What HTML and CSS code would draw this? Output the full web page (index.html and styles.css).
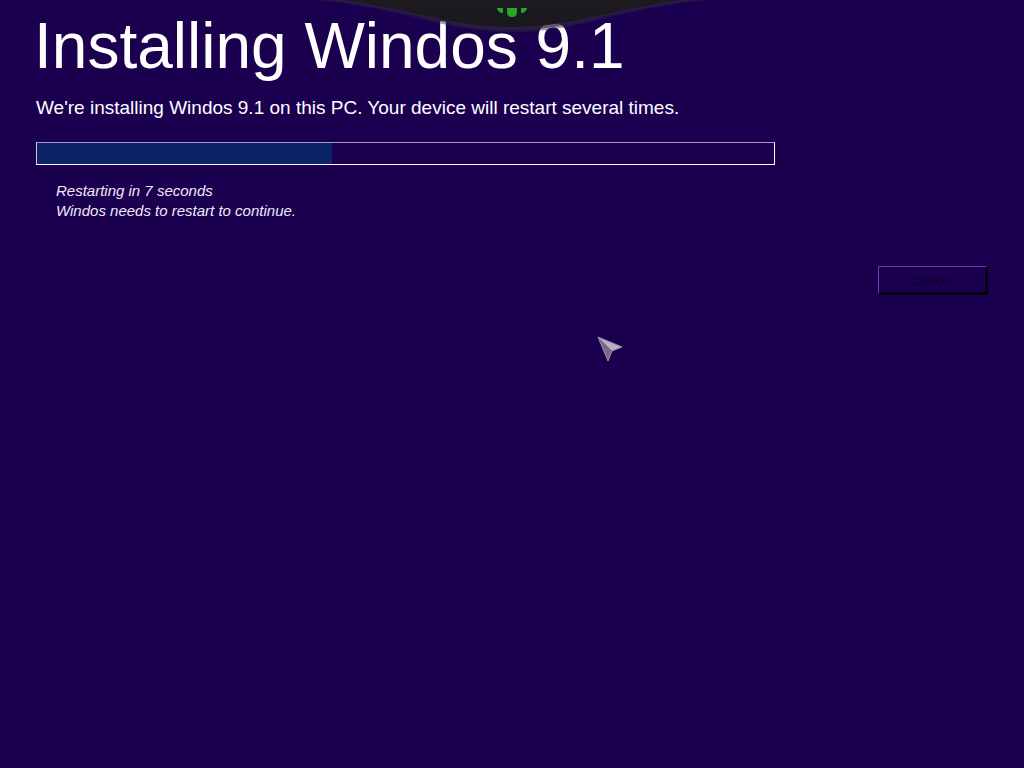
FILE: index.html
```
<!DOCTYPE html>
<html lang="en">
<head>
    <meta charset="UTF-8">
    <meta name="viewport" content="width=device-width, initial-scale=1">
    <title>Installing Windos 9.1</title>
    <link rel="stylesheet" href="styles.css">
</head>
<body>
<main class="setup">
    <h1>Installing Windos 9.1</h1>
    <p class="intro" id="intro">We're installing Windos 9.1 on this PC. Your device will restart several times.</p>
    <progress class="bar" max="100" value="40" aria-labelledby="intro"></progress>
    <div class="status">
        <p>Restarting in 7 seconds</p>
        <p>Windos needs to restart to continue.</p>
    </div>
    <div class="actions">
        <button type="button">Cancel</button>
    </div>
</main>

<!-- pull-down tab at the top of the screen -->
<svg class="tab" viewBox="0 0 424 40" aria-hidden="true">
    <defs>
        <linearGradient id="tabFill" x1="0" y1="0" x2="0" y2="1">
            <stop offset="0" stop-color="#1d1a20"/>
            <stop offset="1" stop-color="#19181d"/>
        </linearGradient>
    </defs>
    <path d="M16 0 C58 3 98 13 138 23 Q212 41 286 23 C326 13 366 3 408 0Z" fill="#302a48" fill-opacity="0.45"/>
    <path d="M26 0 C65 4 102 12 140 21 Q212 39 284 21 C322 12 359 4 398 0Z" fill="#2c2738" fill-opacity="0.6"/>
    <path d="M42 0 C76 5 110 12 146 20 Q212 34 278 20 C314 12 348 5 382 0Z" fill="url(#tabFill)"/>
    <g fill="#27a527">
        <path d="M197 8h6v5q-5 0-6-5z"/>
        <path d="M207 8h10v4q0 5-5 5t-5-5z"/>
        <path d="M221 8h6q-1 5-6 5z"/>
    </g>
</svg>

<!-- mouse pointer -->
<svg class="pointer" viewBox="0 0 28 28" aria-hidden="true">
    <path d="M1 1 L25 11 L15 15 L11 25Z" fill="#7f7592"/>
    <path d="M1 1 L25 11 L15 15Z" fill="#b9b0c4"/>
    <path d="M1 1 L15 15 L11 25Z" fill="#76698a"/>
    <path d="M1 1 L25 11 L15 15 L11 25Z" fill="none" stroke="#978ba8"/>
</svg>
</body>
</html>
```
FILE: styles.css
```
body, h1, p {
    margin: 0;
    padding: 0;
}

body {
    position: relative;
    min-height: 100vh;
    background: #1a004f;
    color: #fff;
    font: 15px/20px "Liberation Sans", Arial, sans-serif;
    overflow-x: hidden;
}

.setup {
    padding: 8px 36px;
}

h1 {
    font-size: 64px;
    line-height: 76px;
    font-weight: normal;
    margin-left: -2px;
}

.intro {
    font-size: 19px;
    line-height: 24px;
    margin-top: 12px;
}

.bar {
    display: block;
    box-sizing: border-box;
    width: 77.6%;
    height: 23px;
    margin-top: 22px;
    border: 1px solid #fff;
    border-top-color: #a79bc4;
    border-left-color: #cdc4e0;
    background: #1a004f;
    appearance: none;
    -webkit-appearance: none;
}

.bar::-webkit-progress-bar {
    background: #1a004f;
}

.bar::-webkit-progress-value {
    background: #0a2466;
}

.status {
    margin: 16px 0 0 20px;
    font-style: italic;
    color: #f0eaf8;
}

.actions {
    display: flex;
    justify-content: flex-end;
    margin-top: 45px;
}

.actions button {
    width: 110px;
    height: 29px;
    padding: 2px 0 0;
    background: #1a004f;
    border: 1px solid #5a46b4;
    border-right: 3px solid #05000f;
    border-bottom: 3px solid #05000f;
    color: #0e0030;
    font: 13px/20px "Liberation Sans", Arial, sans-serif;
}

.tab {
    position: absolute;
    top: 0;
    left: 50%;
    width: 424px;
    height: 40px;
    transform: translateX(-50%);
}

.pointer {
    position: absolute;
    top: 336px;
    left: 597px;
    width: 28px;
    height: 28px;
}
```
